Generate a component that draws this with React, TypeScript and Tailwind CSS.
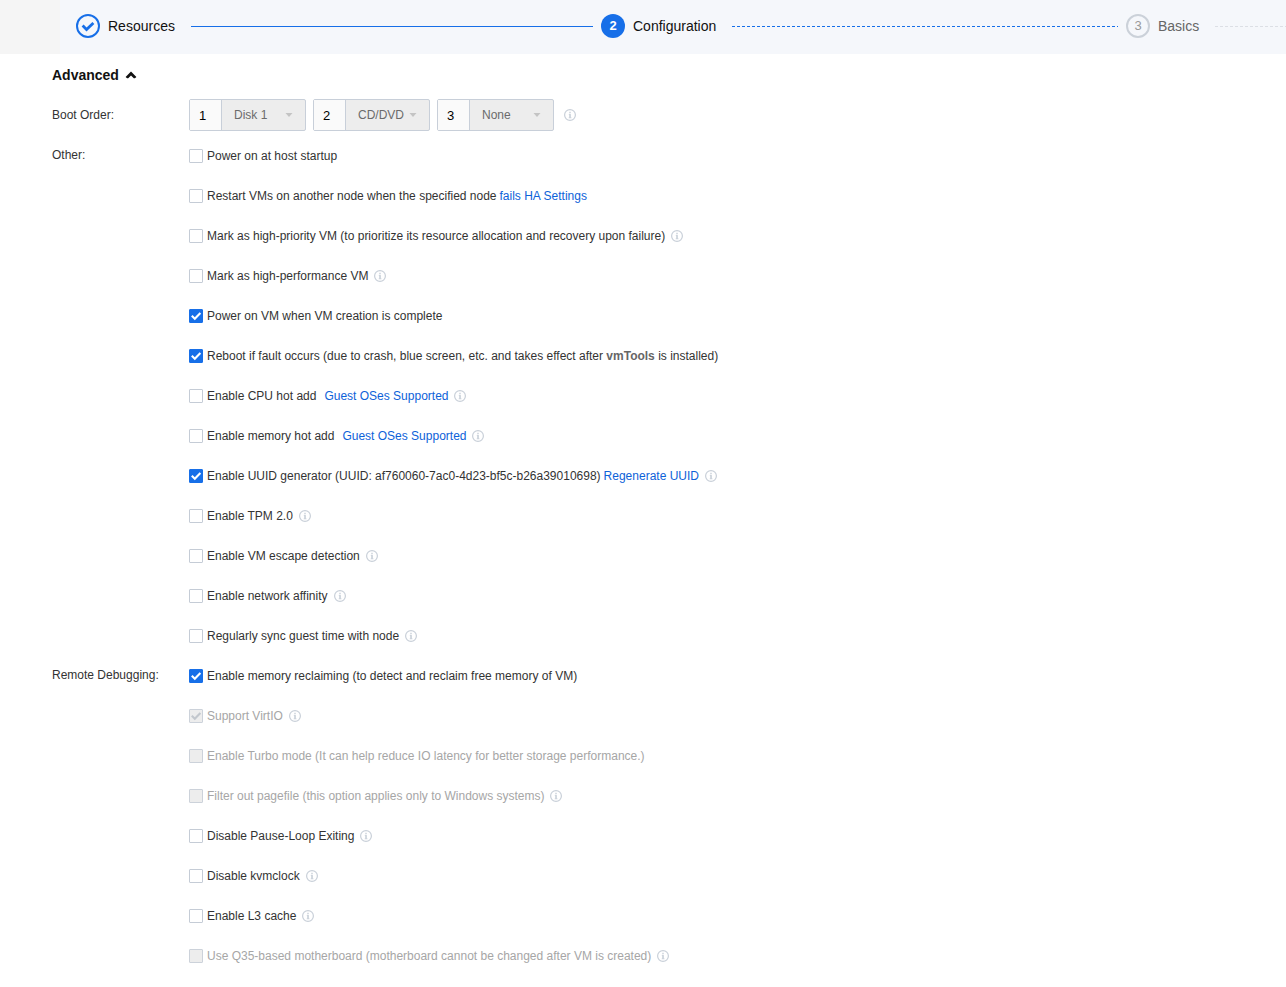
import React, { useState } from "react";
import { clsx } from "clsx";

type Option = {
  id: string;
  label: React.ReactNode;
  checked?: boolean;
  disabled?: boolean;
  info?: boolean;
  action?: React.ReactNode;
};

const linkClass = "text-[#0d62d9] hover:underline";

const otherOptions: Option[] = [
  { id: "host-startup", label: "Power on at host startup" },
  {
    id: "ha",
    label: "Restart VMs on another node when the specified node",
    action: <a href="#ha" className={clsx(linkClass, "ml-[3px]")}>fails HA Settings</a>,
  },
  {
    id: "high-priority",
    label: "Mark as high-priority VM (to prioritize its resource allocation and recovery upon failure)",
    info: true,
  },
  { id: "high-performance", label: "Mark as high-performance VM", info: true },
  { id: "power-on", label: "Power on VM when VM creation is complete", checked: true },
  {
    id: "reboot",
    label: (
      <>
        Reboot if fault occurs (due to crash, blue screen, etc. and takes effect after{" "}
        <b className="text-[#666]">vmTools</b> is installed)
      </>
    ),
    checked: true,
  },
  {
    id: "cpu-hot-add",
    label: "Enable CPU hot add",
    action: <a href="#cpu-guest" className={clsx(linkClass, "ml-2")}>Guest OSes Supported</a>,
    info: true,
  },
  {
    id: "memory-hot-add",
    label: "Enable memory hot add",
    action: <a href="#memory-guest" className={clsx(linkClass, "ml-2")}>Guest OSes Supported</a>,
    info: true,
  },
  {
    id: "uuid",
    label: "Enable UUID generator (UUID: af760060-7ac0-4d23-bf5c-b26a39010698)",
    checked: true,
    action: <button type="button" className={clsx(linkClass, "ml-[3px]")}>Regenerate UUID</button>,
    info: true,
  },
  { id: "tpm", label: "Enable TPM 2.0", info: true },
  { id: "escape", label: "Enable VM escape detection", info: true },
  { id: "affinity", label: "Enable network affinity", info: true },
  { id: "sync-time", label: "Regularly sync guest time with node", info: true },
];

const debugOptions: Option[] = [
  {
    id: "reclaim",
    label: "Enable memory reclaiming (to detect and reclaim free memory of VM)",
    checked: true,
  },
  { id: "virtio", label: "Support VirtIO", checked: true, disabled: true, info: true },
  {
    id: "turbo",
    label: "Enable Turbo mode (It can help reduce IO latency for better storage performance.)",
    disabled: true,
  },
  {
    id: "pagefile",
    label: "Filter out pagefile (this option applies only to Windows systems)",
    disabled: true,
    info: true,
  },
  { id: "ple", label: "Disable Pause-Loop Exiting", info: true },
  { id: "kvmclock", label: "Disable kvmclock", info: true },
  { id: "l3", label: "Enable L3 cache", info: true },
  {
    id: "q35",
    label: "Use Q35-based motherboard (motherboard cannot be changed after VM is created)",
    disabled: true,
    info: true,
  },
];

const InfoIcon = () => (
  <svg viewBox="0 0 12 12" className="block size-3 shrink-0 text-[#c9d0d9]" fill="none" aria-hidden="true">
    <circle cx="6" cy="6" r="5.4" stroke="currentColor" strokeWidth="1.2" />
    <path d="M4.8 5.4h1.3v3.4M4.7 8.8h2.8" stroke="currentColor" strokeWidth="0.8" />
    <path d="M5.3 2.8h1.4v1.4H5.3zM5.3 5h1.4v4H5.3z" fill="currentColor" />
  </svg>
);

const Check = ({ className }: { className?: string }) => (
  <svg viewBox="0 0 14 14" className={className} fill="none" aria-hidden="true">
    <path d="M2.8 6.7l3 3L11.4 4" stroke="currentColor" strokeWidth="2.1" />
  </svg>
);

const OptionRow = ({ option }: { option: Option }) => {
  const [checked, setChecked] = useState(!!option.checked);

  return (
    <li className="flex h-10 items-center">
      <span className="relative flex size-[14px] shrink-0">
        <input
          id={option.id}
          type="checkbox"
          checked={checked}
          disabled={option.disabled}
          onChange={(e) => setChecked(e.target.checked)}
          className="size-full appearance-none rounded-[1px] border border-[#c5ccd6] bg-white checked:border-[#176fe8] checked:bg-[#176fe8] disabled:border-[#ccd2da] disabled:bg-[#ededed]"
        />
        {checked && (
          <Check
            className={clsx(
              "pointer-events-none absolute inset-0",
              option.disabled ? "text-[#c2c7cd]" : "text-white"
            )}
          />
        )}
      </span>
      <label htmlFor={option.id} className={clsx("ml-1", option.disabled && "text-[#a6a6a6]")}>
        {option.label}
      </label>
      {option.action}
      {option.info && (
        <span className="ml-1.5">
          <InfoIcon />
        </span>
      )}
    </li>
  );
};

const OptionGroup = ({ title, options }: { title: string; options: Option[] }) => (
  <section className="flex">
    <h3 className="w-[137px] shrink-0 leading-[38px]">{title}</h3>
    <ul className="flex-1">
      {options.map((option) => (
        <OptionRow key={option.id} option={option} />
      ))}
    </ul>
  </section>
);

const BootDevice = ({ order, device }: { order: number; device: string }) => (
  <div className="flex h-8 w-[117px] rounded-[2px] border border-[#c8cfd9] bg-[#ededed]">
    <label
      htmlFor={`boot-${order}`}
      className="flex w-8 items-center justify-center border-r border-[#c8cfd9] bg-[#fafafa] pr-1.5 pt-0.5 text-[13px] text-black"
    >
      {order}
    </label>
    <div className="relative flex-1">
      <select
        id={`boot-${order}`}
        disabled
        className="size-full appearance-none pl-3 text-[#6b6b6b] disabled:opacity-100"
      >
        <option>{device}</option>
      </select>
      <svg viewBox="0 0 8 4" className="absolute right-3 top-[13px] h-1 w-2" aria-hidden="true">
        <path d="M0.5 0h7L4 4z" fill="#c4c4c4" />
      </svg>
    </div>
  </div>
);

const stepText = "ml-2 mr-4 whitespace-nowrap text-sm";

const Stepper = () => (
  <header className="flex h-[54px] overflow-hidden bg-[#f5f7fb]">
    <div className="w-[60px] shrink-0 bg-[#f5f5f5]" />
    <ol className="flex flex-1 items-center pb-0.5 pl-4">
      <li className="flex flex-1 items-center">
        <span className="flex size-6 shrink-0 items-center justify-center rounded-full border-2 border-[#176fe8]">
          <svg viewBox="0 0 14 14" className="size-[14px] text-[#176fe8]" fill="none" aria-hidden="true">
            <path d="M1.6 6.6l3.9 3.9 6.9-6.6" stroke="currentColor" strokeWidth="2.8" />
          </svg>
        </span>
        <span className={clsx(stepText, "text-[#111]")}>Resources</span>
        <span className="mr-2 h-px flex-1 bg-[#176fe8]" />
      </li>
      <li className="flex flex-1 items-center" aria-current="step">
        <span className="flex size-6 shrink-0 items-center justify-center rounded-full bg-[#176fe8] text-[13px] font-bold text-white">
          2
        </span>
        <span className={clsx(stepText, "text-[#111]")}>Configuration</span>
        <span className="mr-2 h-px flex-1 bg-[repeating-linear-gradient(90deg,#176fe8_0_3px,transparent_3px_5px)]" />
      </li>
      <li className="flex w-40 shrink-0 items-center">
        <span className="flex size-6 shrink-0 items-center justify-center rounded-full border-2 border-[#cbd1d9] text-[13px] text-[#999]">
          3
        </span>
        <span className={clsx(stepText, "text-[#666]")}>Basics</span>
        <span className="h-px flex-1 bg-[repeating-linear-gradient(90deg,#dcdfe5_0_3px,transparent_3px_5px)]" />
      </li>
    </ol>
  </header>
);

const App = () => {
  const [open, setOpen] = useState(true);

  return (
    <div className="min-h-screen bg-white font-['Liberation_Sans',Arial,sans-serif] text-xs text-[#333]">
      <Stepper />
      <main className="pl-[52px]">
        <button
          type="button"
          aria-expanded={open}
          onClick={() => setOpen(!open)}
          className="flex h-[41px] items-center gap-1.5 text-sm font-bold text-[#111]"
        >
          Advanced
          <svg viewBox="0 0 12 8" className={clsx("h-2 w-3", !open && "rotate-180")} aria-hidden="true">
            <path d="M6 0.6L11.4 6 9.9 7.2H8.8L6 4.5 3.2 7.2H2.1L0.6 6z" fill="currentColor" />
          </svg>
        </button>
        {open && (
          <>
            <section className="flex h-[41px]">
              <h3 className="w-[137px] shrink-0 leading-10">Boot Order:</h3>
              <div className="flex items-start gap-[7px] pt-1">
                <BootDevice order={1} device="Disk 1" />
                <BootDevice order={2} device="CD/DVD" />
                <BootDevice order={3} device="None" />
                <span className="ml-[3px] flex h-8 items-center">
                  <InfoIcon />
                </span>
              </div>
            </section>
            <OptionGroup title="Other:" options={otherOptions} />
            <OptionGroup title="Remote Debugging:" options={debugOptions} />
          </>
        )}
      </main>
    </div>
  );
};

export default App;
